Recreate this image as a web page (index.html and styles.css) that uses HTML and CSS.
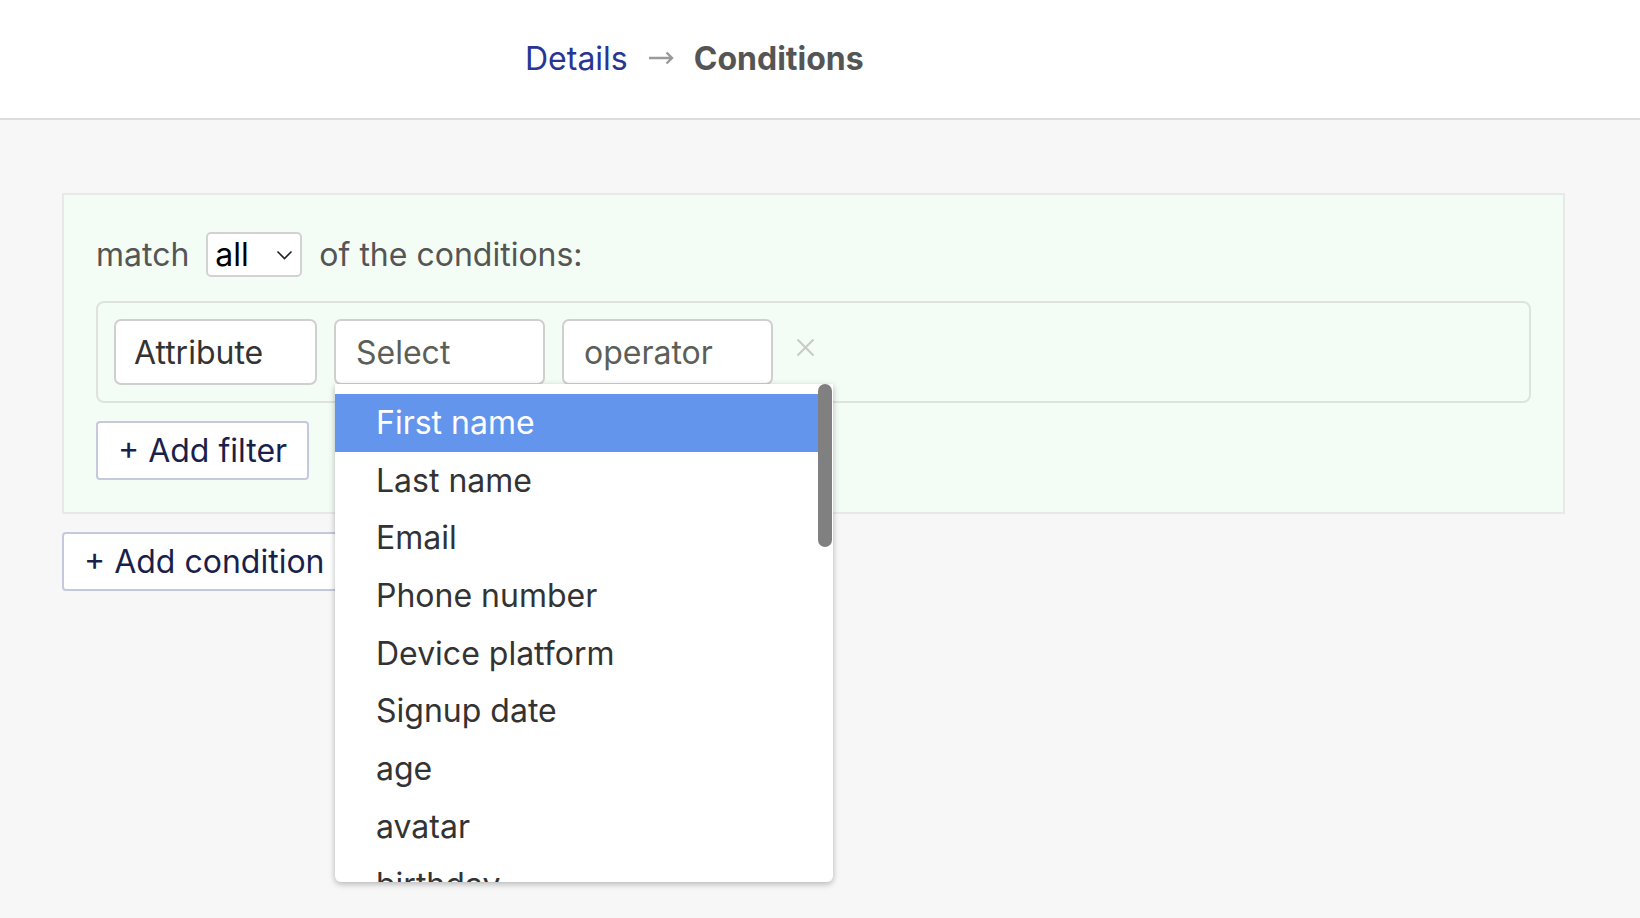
FILE: index.html
```html
<!DOCTYPE html>
<html lang="en">
<head>
<meta charset="utf-8">
<title>Conditions</title>
<link rel="stylesheet" href="styles.css">
</head>
<body>
<header class="topbar">
  <nav class="crumbs">
    <span class="crumb-link">Details</span>
    <svg class="crumb-arrow" width="25" height="14" viewBox="0 0 25 14"><path d="M0 7H23M17.5 1.5L23 7L17.5 12.5" stroke="#9a9a9a" stroke-width="2.4" fill="none"/></svg>
    <span class="crumb-current">Conditions</span>
  </nav>
</header>
<main class="content">
  <section class="group">
    <div class="match-row">
      <span>match</span>
      <div class="mini-select">
        <span class="mini-value">all</span>
        <svg class="chev" width="17" height="10" viewBox="0 0 17 10"><path d="M1.5 1.5L8.5 8.5L15.5 1.5" stroke="#222" stroke-width="1.6" fill="none"/></svg>
      </div>
      <span>of the conditions:</span>
    </div>
    <div class="filter-box">
      <div class="field field-attr">Attribute</div>
      <div class="field field-wide placeholder field-open">Select
        <div class="dropdown">
          <ul class="options">
            <li class="option active">First name</li>
            <li class="option">Last name</li>
            <li class="option">Email</li>
            <li class="option">Phone number</li>
            <li class="option">Device platform</li>
            <li class="option">Signup date</li>
            <li class="option">age</li>
            <li class="option">avatar</li>
            <li class="option">birthday</li>
          </ul>
          <div class="thumb"></div>
        </div>
      </div>
      <div class="field field-wide placeholder">operator</div>
      <svg class="remove" width="19" height="19" viewBox="0 0 19 19"><path d="M1.5 1.5L17.5 17.5M17.5 1.5L1.5 17.5" stroke="#cacaca" stroke-width="2.2" fill="none"/></svg>
    </div>
    <button class="btn">+ Add filter</button>
  </section>
  <button class="btn btn-condition">+ Add condition</button>
</main>
</body>
</html>
```

FILE: styles.css
```css
* { box-sizing: border-box; }

html, body {
  margin: 0;
  padding: 0;
}

body {
  background: #f7f7f7;
  font-family: Inter, "Noto Sans", "Liberation Sans", sans-serif;
  color: #555;
  min-height: 918px;
}

.topbar {
  height: 120px;
  background: #fff;
  border-bottom: 2px solid #dcdcdc;
  display: flex;
  align-items: center;
  padding-left: 525px;
  padding-bottom: 2px;
}

.crumbs {
  display: flex;
  align-items: center;
  font-size: 32px;
}

.crumb-link {
  color: #283593;
}

.crumb-arrow {
  margin: 0 20px 0 21px;
}

.crumb-current {
  color: #555;
  font-weight: 700;
}

.content {
  padding: 73px 75px 0 62px;
}

.group {
  background: #f3fdf5;
  border: 2px solid #e7e9e7;
  padding: 37px 32px 32px 32px;
}

.match-row {
  display: flex;
  align-items: center;
  font-size: 32px;
  color: #555;
  gap: 17px;
}

.mini-select {
  width: 96px;
  height: 45px;
  background: #fff;
  border: 2px solid #d2d2d2;
  border-radius: 5px;
  display: flex;
  align-items: center;
  justify-content: space-between;
  padding: 0 7px 0 7px;
  color: #000;
}

.mini-value {
  font-size: 32px;
}

.filter-box {
  margin-top: 24px;
  border: 2px solid #dfe3df;
  border-radius: 8px;
  padding: 16px;
  display: flex;
  align-items: center;
  gap: 17px;
}

.field {
  height: 66px;
  background: #fff;
  border: 2px solid #cfcfcf;
  border-radius: 7px;
  display: flex;
  align-items: center;
  padding: 0 18px;
  font-size: 32px;
  color: #333;
}

.field-attr { width: 203px; }
.field-wide { width: 211px; }

.placeholder { color: #5c5f58; padding-left: 20px; }

.field-open {
  position: relative;
}

.remove {
  margin-left: 6px;
  margin-bottom: 10px;
}

.dropdown {
  position: absolute;
  left: -1px;
  top: calc(100% + 1px);
  width: 498px;
  height: 498px;
  background: #fff;
  border-radius: 0 0 6px 6px;
  box-shadow: 0 2px 6px rgba(0, 0, 0, 0.28);
  overflow: hidden;
  z-index: 10;
}

.options {
  list-style: none;
  margin: 0;
  padding: 10px 0 0 0;
  width: 483px;
}

.option {
  height: 57.7px;
  line-height: 57.7px;
  padding-left: 41px;
  font-size: 32px;
  color: #333;
  white-space: nowrap;
}

.option.active {
  background: #6495ed;
  color: #fff;
}

.thumb {
  position: absolute;
  top: 0;
  right: 1px;
  width: 14px;
  height: 163px;
  border-radius: 7px;
  background: #808080;
}

.btn {
  display: flex;
  align-items: center;
  height: 59px;
  margin-top: 18px;
  padding: 0 20px;
  background: #fff;
  border: 2px solid #c6c8de;
  border-radius: 4px;
  font-family: Inter, "Noto Sans", "Liberation Sans", sans-serif;
  font-size: 32px;
  color: #1b1f4b;
}

.btn-condition {
  margin-top: 18px;
}
```
